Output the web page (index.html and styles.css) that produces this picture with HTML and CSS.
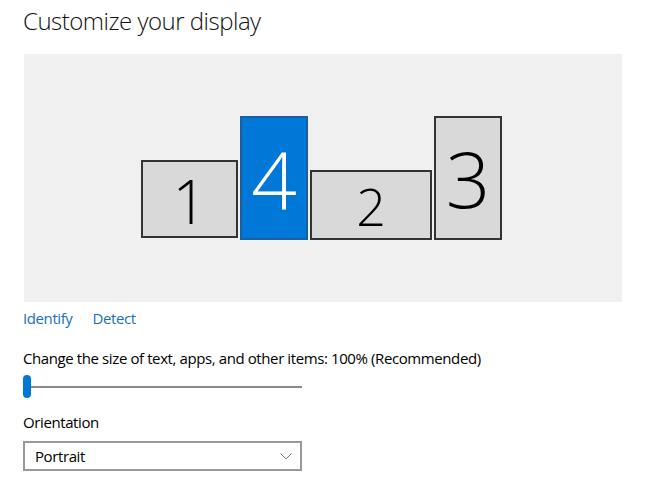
FILE: index.html
```html
<!DOCTYPE html>
<html lang="en">
<head>
<meta charset="utf-8">
<title>Customize your display</title>
<link rel="stylesheet" href="styles.css">
</head>
<body>
<main class="page">
  <h1 class="title">Customize your display</h1>
  <div class="arrangement">
    <div class="monitor m1"><span class="num n1">1</span></div>
    <div class="monitor m4 selected"><span class="num n4">4</span></div>
    <div class="monitor m2"><span class="num n2">2</span></div>
    <div class="monitor m3"><span class="num n3">3</span></div>
  </div>
  <div class="links">
    <a class="link" href="#">Identify</a>
    <a class="link" href="#">Detect</a>
  </div>
  <div class="setting scale">
    <div class="label">Change the size of text, apps, and other items: 100% (Recommended)</div>
    <div class="slider">
      <span class="thumb"></span>
      <span class="track"></span>
    </div>
  </div>
  <div class="setting orientation">
    <div class="label">Orientation</div>
    <div class="select">
      <span class="select-value">Portrait</span>
      <svg class="chevron" width="12" height="7" viewBox="0 0 12 7"><path d="M0.5 0.5 L6 6 L11.5 0.5" fill="none" stroke="#7a7a7a" stroke-width="1"/></svg>
    </div>
  </div>
</main>
</body>
</html>
```

FILE: styles.css
```css
* { box-sizing: border-box; }
html, body { margin: 0; padding: 0; background: #fff; }
body {
  font-family: "Open Sans", "Noto Sans", "Liberation Sans", sans-serif;
  color: #000;
  width: 647px;
  height: 498px;
  overflow: hidden;
}
.page {
  padding: 6px 0 0 23px;
  display: flex;
  flex-direction: column;
  align-items: flex-start;
}
.title {
  margin: 0;
  font-size: 24px;
  line-height: 30px;
  font-weight: 300;
  letter-spacing: -0.5px;
  color: #111;
}
.arrangement {
  position: relative;
  margin: 18px 0 0 1px;
  width: 598px;
  height: 248px;
  background: #f0f0f0;
}
.monitor {
  position: absolute;
  display: flex;
  align-items: center;
  justify-content: center;
  background: #d9d9d9;
  border: 2px solid #333;
  color: #000;
  font-weight: 300;
  line-height: 1;
}
.monitor.selected {
  background: #0078d7;
  border-color: #1b5fa3;
  color: #fff;
}
.m1 { left: 117px; top: 106px; width: 97px; height: 78px; }
.m4 { left: 216px; top: 62px; width: 68px; height: 124px; }
.m2 { left: 286px; top: 116px; width: 122px; height: 70px; }
.m3 { left: 410px; top: 62px; width: 68px; height: 124px; }
.num { display: block; }
.n1 { font-size: 60px; margin-top: 4px; }
.n4 { font-size: 80px; }
.n2 { font-size: 52px; margin-top: 2px; }
.n3 { font-size: 78px; }
.links {
  margin-top: 6px;
  display: flex;
  gap: 20px;
}
.link {
  font-size: 15px;
  line-height: 20px;
  letter-spacing: -0.4px;
  color: #1a70bd;
  text-decoration: none;
}
.setting .label {
  font-size: 15px;
  line-height: 20px;
  letter-spacing: -0.4px;
  color: #000;
}
.scale { margin-top: 20px; }
.slider {
  margin-top: 7px;
  width: 279px;
  height: 23px;
  display: flex;
  align-items: center;
}
.thumb {
  width: 8px;
  height: 23px;
  border-radius: 4px;
  background: #0078d7;
  flex: none;
}
.track {
  flex: 1;
  height: 2px;
  background: #8a8a8a;
}
.orientation { margin-top: 14px; }
.select {
  margin-top: 9px;
  width: 279px;
  height: 30px;
  border: 2px solid #999;
  display: flex;
  align-items: center;
  justify-content: space-between;
  padding: 0 8px 0 10px;
}
.select-value {
  font-size: 15px;
  line-height: 20px;
  letter-spacing: -0.4px;
}
.chevron { display: block; }
```
